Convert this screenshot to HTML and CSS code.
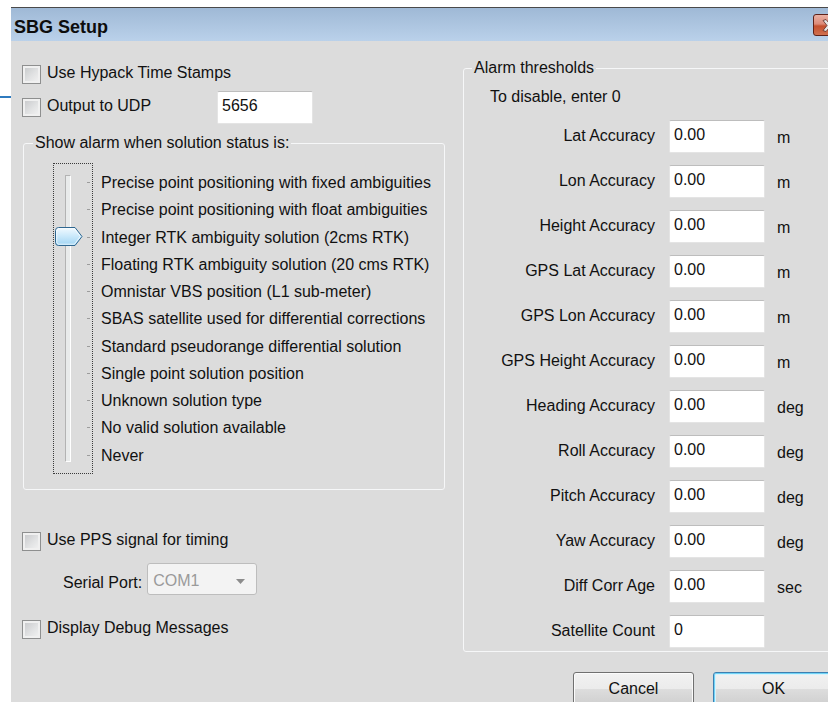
FILE: index.html
```html
<!DOCTYPE html>
<html lang="en">
<head>
<meta charset="utf-8">
<title>SBG Setup</title>
<link rel="stylesheet" href="styles.css">
</head>
<body>
<div class="page">
  <div class="gutter"><div class="gutter-line"></div></div>

  <div class="window">
    <div class="titlebar">
      <span class="title">SBG Setup</span>
      <span class="close-btn">
        <svg width="14" height="13" viewBox="0 0 14 13">
          <path d="M1 1.5 L4 0.5 L7 4 L10 0.5 L13 1.5 L9 6.5 L13 11.5 L10 12.5 L7 9 L4 12.5 L1 11.5 L5 6.5 Z" fill="#e6e6e6" stroke="#5a2a22" stroke-width="0.8"/>
        </svg>
      </span>
    </div>

    <div class="client">
      <!-- left column: options and status slider -->
      <div class="col-left">
        <label class="check row-hypack"><span class="box"></span><span>Use Hypack Time Stamps</span></label>

        <div class="udp-row">
          <label class="check check-udp"><span class="box"></span><span>Output to UDP</span></label>
          <div class="textbox udp-box">5656</div>
        </div>

        <fieldset class="group status-group">
          <legend>Show alarm when solution status is:</legend>
          <div class="slider-wrap">
            <div class="slider">
              <div class="track"></div>
              <div class="ticks">
                <span></span><span></span><span></span><span></span><span></span><span></span>
                <span></span><span></span><span></span><span></span><span></span>
              </div>
              <svg class="thumb" width="28" height="19" viewBox="0 0 28 19">
                <defs>
                  <linearGradient id="thumbFill" x1="0" y1="0" x2="0" y2="1">
                    <stop offset="0" stop-color="#f2faff"/>
                    <stop offset="0.45" stop-color="#cdeafb"/>
                    <stop offset="1" stop-color="#9fd4f3"/>
                  </linearGradient>
                </defs>
                <path d="M3.5 0.5 H20 L27 9.5 L20 18.5 H3.5 Q0.5 18.5 0.5 15.5 V3.5 Q0.5 0.5 3.5 0.5 Z" fill="url(#thumbFill)" stroke="#2f6790" stroke-width="1"/>
                <path d="M3.8 1.8 H19.4 L25.3 9.5 L19.4 17.2 H3.8 Q1.8 17.2 1.8 15.2 V3.8 Q1.8 1.8 3.8 1.8 Z" fill="none" stroke="#ffffff" stroke-opacity="0.7" stroke-width="1"/>
              </svg>
            </div>
            <ul class="status-list">
              <li>Precise point positioning with fixed ambiguities</li>
              <li>Precise point positioning with float ambiguities</li>
              <li>Integer RTK ambiguity solution (2cms RTK)</li>
              <li>Floating RTK ambiguity solution (20 cms RTK)</li>
              <li>Omnistar VBS position (L1 sub-meter)</li>
              <li>SBAS satellite used for differential corrections</li>
              <li>Standard pseudorange differential solution</li>
              <li>Single point solution position</li>
              <li>Unknown solution type</li>
              <li>No valid solution available</li>
              <li>Never</li>
            </ul>
          </div>
        </fieldset>

        <label class="check row-pps"><span class="box"></span><span>Use PPS signal for timing</span></label>

        <div class="port-row">
          <span class="port-label">Serial Port:</span>
          <div class="combo">
            <span>COM1</span>
            <svg width="9" height="5" viewBox="0 0 9 5"><path d="M0 0 H9 L4.5 5 Z" fill="#8c8c8c"/></svg>
          </div>
        </div>

        <label class="check row-debug"><span class="box"></span><span>Display Debug Messages</span></label>
      </div>

      <!-- right column: alarm thresholds and dialog buttons -->
      <div class="col-right">
        <fieldset class="group alarm-group">
          <legend>Alarm thresholds</legend>
          <p class="hint">To disable, enter 0</p>
          <div class="thresholds">
            <span class="lbl">Lat Accuracy</span><div class="textbox">0.00</div><span class="unit">m</span>
            <span class="lbl">Lon Accuracy</span><div class="textbox">0.00</div><span class="unit">m</span>
            <span class="lbl">Height Accuracy</span><div class="textbox">0.00</div><span class="unit">m</span>
            <span class="lbl">GPS Lat Accuracy</span><div class="textbox">0.00</div><span class="unit">m</span>
            <span class="lbl">GPS Lon Accuracy</span><div class="textbox">0.00</div><span class="unit">m</span>
            <span class="lbl">GPS Height Accuracy</span><div class="textbox">0.00</div><span class="unit">m</span>
            <span class="lbl">Heading Accuracy</span><div class="textbox">0.00</div><span class="unit">deg</span>
            <span class="lbl">Roll Accuracy</span><div class="textbox">0.00</div><span class="unit">deg</span>
            <span class="lbl">Pitch Accuracy</span><div class="textbox">0.00</div><span class="unit">deg</span>
            <span class="lbl">Yaw Accuracy</span><div class="textbox">0.00</div><span class="unit">deg</span>
            <span class="lbl">Diff Corr Age</span><div class="textbox">0.00</div><span class="unit">sec</span>
            <span class="lbl">Satellite Count</span><div class="textbox">0</div><span class="unit"></span>
          </div>
        </fieldset>

        <div class="buttons">
          <button class="btn">Cancel</button>
          <button class="btn btn-default">OK</button>
        </div>
      </div>
    </div>
  </div>
</div>
</body>
</html>
```

FILE: styles.css
```css
* {
  box-sizing: border-box;
}

html,
body {
  margin: 0;
  padding: 0;
  overflow: hidden;
  background: #ffffff;
}

body {
  font-family: "Liberation Sans", Arial, sans-serif;
  font-size: 16px;
  line-height: 18px;
  color: #111111;
}

.page {
  display: flex;
  width: 828px;
  height: 702px;
  overflow: hidden;
}

/* strip of the window behind the dialog */
.gutter {
  flex: none;
  width: 11px;
  padding-top: 96px;
}

.gutter-line {
  height: 2px;
  background: #2f7bbf;
}

.window {
  flex: none;
  width: 860px;
  margin-top: 7px;
  border-top: 1px solid #4a4a4a;
  background: #dcdcdc;
}

/* caption */
.titlebar {
  height: 33px;
  display: flex;
  align-items: flex-start;
  justify-content: space-between;
  padding-left: 3px;
  background: linear-gradient(#9fb9d6, #bad1ea);
}

.title {
  margin-top: 9px;
  font-weight: bold;
  font-size: 18px;
  line-height: 20px;
  color: #0d0d0d;
}

.close-btn {
  width: 32px;
  height: 22px;
  margin-top: 6px;
  margin-right: 26px;
  display: flex;
  align-items: center;
  justify-content: center;
  border: 1px solid #5e2219;
  border-radius: 3px;
  background: linear-gradient(#eab1a4 0%, #dc8a78 45%, #c4502f 55%, #d0704f 100%);
}

/* dialog client area */
.client {
  display: grid;
  grid-template-columns: 452px 1fr;
}

.col-left {
  padding-left: 11px;
  padding-top: 23px;
}

.check {
  display: flex;
  align-items: flex-start;
  white-space: nowrap;
}

.box {
  flex: none;
  width: 19px;
  height: 19px;
  margin-top: 1px;
  margin-right: 6px;
  border: 1px solid #8e8f8f;
  background: linear-gradient(135deg, #c4c6c8 0%, #e1e2e3 55%, #f4f4f4 100%);
  box-shadow: inset 0 0 0 2px #f0f0f0;
}

.udp-row {
  display: flex;
  align-items: flex-start;
  margin-top: 7px;
}

.check-udp {
  width: 195px;
  margin-top: 6px;
}

.textbox {
  width: 96px;
  height: 33px;
  padding: 5px 4px 0;
  background: #ffffff;
  border: 1px solid #e4e4e4;
  border-top-color: #bdbdbd;
  border-radius: 2px;
  white-space: nowrap;
}

.udp-box {
  width: 96px;
}

/* group boxes */
.group {
  margin: 0;
  border: 1px solid #f6f7f8;
  border-radius: 3px;
  min-inline-size: 0;
}

.group legend {
  padding: 0 2px;
}

.status-group {
  width: 422px;
  margin: 10px 0 0 1px;
  padding: 11px 0 15px 9px;
}

.slider-wrap {
  display: flex;
  align-items: flex-start;
  margin-left: 20px;
}

.slider {
  position: relative;
  flex: none;
  display: flex;
  width: 40px;
  height: 311px;
  border: 1px dotted #3a3a3a;
}

.track {
  width: 6px;
  margin: 11px 0 11px 11px;
  background: #e9ebeb;
  border: 1px solid #b3b3b3;
  border-right-color: #ffffff;
  border-bottom-color: #ffffff;
}

.ticks {
  display: flex;
  flex-direction: column;
  margin-top: 5px;
  margin-left: 16px;
}

.ticks span {
  height: 27.25px;
  display: flex;
  align-items: center;
}

.ticks span::before {
  content: "";
  width: 3px;
  height: 1px;
  background: #9c9c9c;
}

.thumb {
  position: absolute;
  left: 1px;
  top: 63px;
}

.status-list {
  list-style: none;
  margin: 6px 0 0 8px;
  padding: 0;
  line-height: 27.25px;
  white-space: nowrap;
}

.row-pps {
  margin-top: 41px;
}

.port-row {
  display: flex;
  align-items: flex-start;
  margin-top: 12px;
  margin-left: 41px;
}

.port-label {
  padding-top: 11px;
  margin-right: 5px;
}

.combo {
  width: 110px;
  height: 32px;
  display: flex;
  align-items: flex-start;
  justify-content: space-between;
  padding: 8px 11px 0 5px;
  color: #9a9a9a;
  background: #f3f3f3;
  border: 1px solid #bdbdbd;
  border-radius: 3px;
}

.combo svg {
  margin-top: 7px;
}

.row-debug {
  margin-top: 24px;
}

/* thresholds */
.col-right {
  display: flex;
  flex-direction: column;
}

.alarm-group {
  margin: 18px 10px 0 0;
  padding: 11px 0 3px 8px;
}

.hint {
  margin: 0 0 0 18px;
}

.thresholds {
  display: grid;
  grid-template-columns: 197px 96px 1fr;
  grid-auto-rows: 33px;
  row-gap: 12px;
  margin-top: 14px;
}

.lbl {
  padding-top: 7px;
  padding-right: 14px;
  text-align: right;
  white-space: nowrap;
}

.unit {
  padding-top: 9px;
  padding-left: 12px;
}

/* dialog buttons */
.buttons {
  display: flex;
  gap: 19px;
  margin-top: 20px;
  padding-left: 110px;
}

.btn {
  width: 121px;
  height: 34px;
  padding: 0;
  font: inherit;
  color: #111111;
  border: 1px solid #707070;
  border-radius: 3px;
  background: linear-gradient(#f2f2f2 0%, #ebebeb 50%, #dddddd 50%, #cfcfcf 100%);
  box-shadow: inset 0 0 0 1px #fbfbfb;
}

.btn-default {
  border-color: #3c7fb1;
  box-shadow: inset 0 0 0 1px #6fd3f6, inset 0 0 0 2px #d6f2fc;
}
```
